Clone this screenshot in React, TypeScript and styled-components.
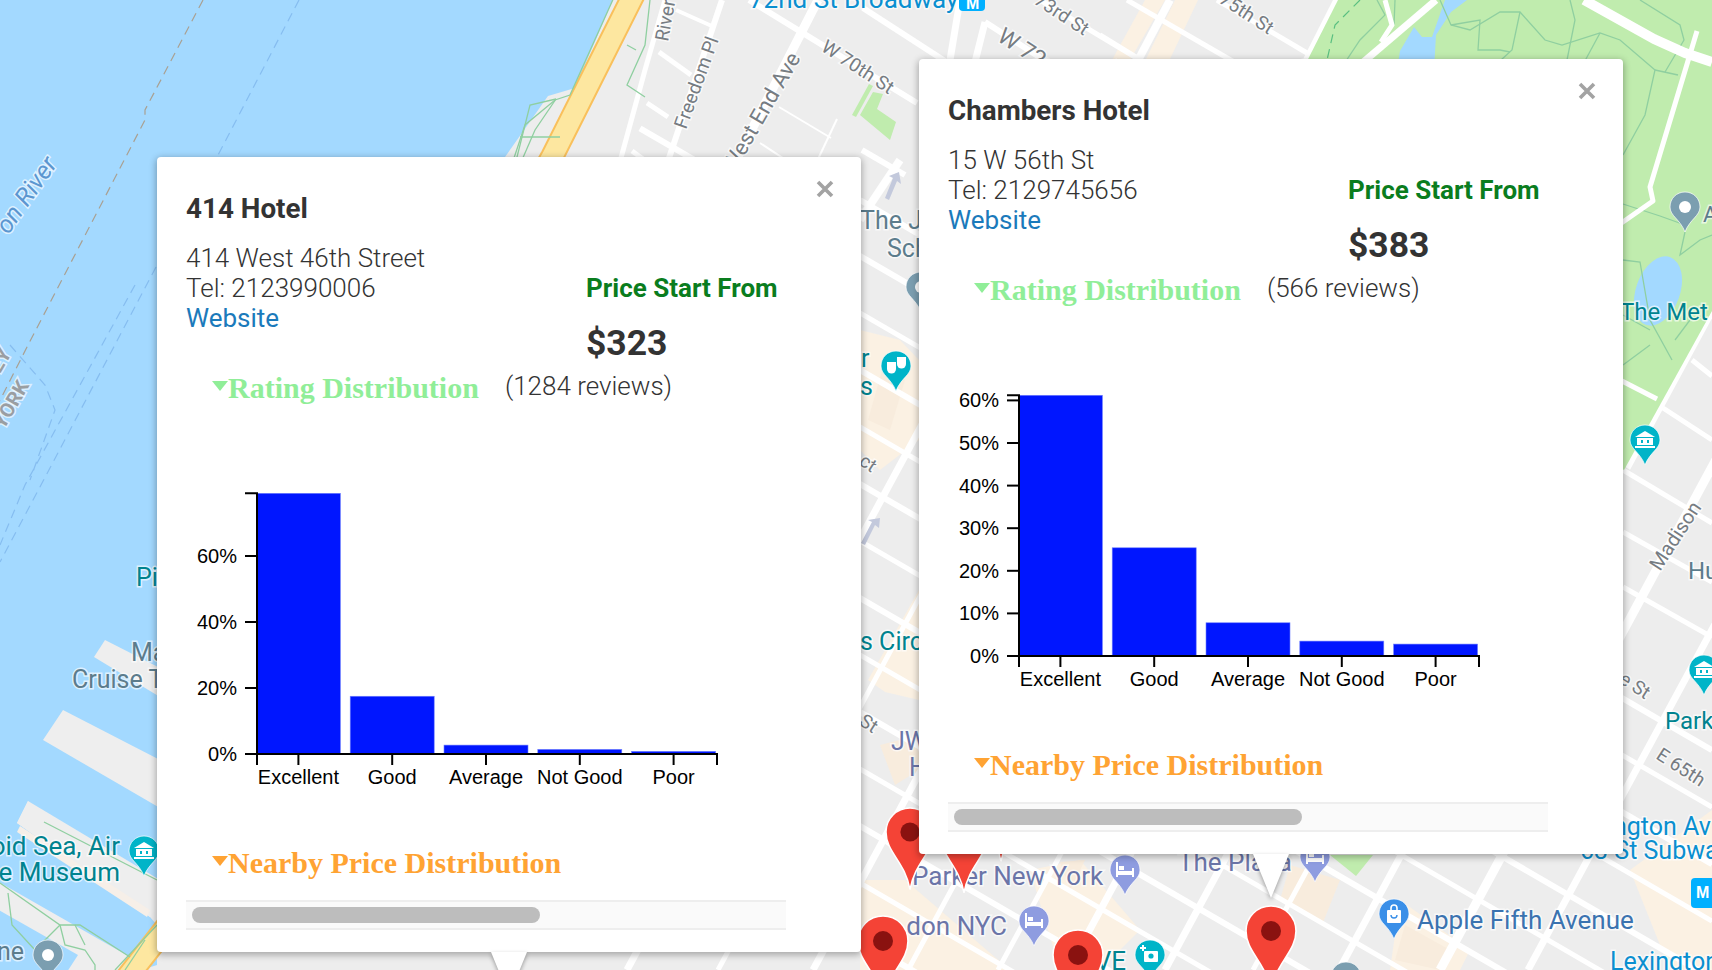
import React from 'react';
import styled, { createGlobalStyle } from 'styled-components';

const GlobalStyle = createGlobalStyle`
  html, body { margin: 0; padding: 0; background: #ededed; }
  body { font-family: Roboto, "Liberation Sans", sans-serif; overflow: hidden; }
`;

const Stage = styled.div`
  position: relative;
  width: 1712px;
  height: 970px;
  overflow: hidden;
`;

const MapCanvas = styled.svg`
  display: block;
  width: 1712px;
  height: 970px;
`;

const Road = styled.polyline`
  fill: none;
  stroke: #ffffff;
  stroke-linejoin: round;
`;

const ParkPath = styled.polyline`
  fill: none;
  stroke: #8fcfa0;
  stroke-width: 1.3;
`;

const Boundary = styled.polyline<{ $tone: string }>`
  fill: none;
  stroke: ${(p) => p.$tone};
  stroke-width: 1.2;
  stroke-dasharray: 9 6;
`;

const toneMap: Record<string, string> = {
  teal: '#00838f',
  indigo: '#6b75a8',
  blue: '#0a8fd0',
  slate: '#5c7c8c',
  gray: '#767c82',
  river: '#5b96d0',
  apple: '#3b73b0',
  state: '#9a9ea2',
};

const MapLabel = styled.text<{ $tone: string; $size: number; $italic?: boolean; $bold?: boolean }>`
  font-family: Roboto, "Liberation Sans", sans-serif;
  font-size: ${(p) => p.$size}px;
  font-style: ${(p) => (p.$italic ? 'italic' : 'normal')};
  font-weight: ${(p) => (p.$bold ? 700 : 400)};
  fill: ${(p) => toneMap[p.$tone]};
  stroke: rgba(255, 255, 255, 0.65);
  stroke-width: 3px;
  paint-order: stroke;
`;

const BadgeLetter = styled.text`
  font-family: "Liberation Sans", sans-serif;
  font-size: 16px;
  font-weight: 700;
  fill: #ffffff;
`;

const Popup = styled.section<{ $left: number; $top: number }>`
  position: absolute;
  left: ${(p) => p.$left}px;
  top: ${(p) => p.$top}px;
  box-sizing: border-box;
  width: 704px;
  height: 795px;
  padding: 35px 0 0 29px;
  background: #ffffff;
  border-radius: 4px;
  box-shadow: 0 2px 7px 1px rgba(0, 0, 0, 0.3);
  color: #333333;
`;

const Tail = styled.div`
  position: absolute;
  left: 334px;
  top: 795px;
  width: 36px;
  height: 44px;
  filter: drop-shadow(0 2px 2px rgba(0, 0, 0, 0.35));
  &::before {
    content: '';
    display: block;
    width: 100%;
    height: 100%;
    background: #ffffff;
    clip-path: polygon(0 0, 100% 0, 50% 100%);
  }
`;

const CloseButton = styled.button`
  position: absolute;
  right: 27px;
  top: 23px;
  width: 18px;
  height: 18px;
  padding: 0;
  border: 0;
  background: none;
  display: block;
`;

const Title = styled.h3`
  margin: 0;
  height: 34px;
  font-size: 27.8px;
  line-height: 34px;
  font-weight: 700;
`;

const InfoRow = styled.div`
  display: flex;
  margin-top: 17px;
`;

const Contact = styled.div`
  width: 400px;
  font-size: 26px;
  line-height: 30px;
  font-weight: 300;
`;

const Line = styled.div`
  white-space: nowrap;
`;

const SiteLink = styled.a`
  display: block;
  color: #1b7abb;
  font-weight: 400;
  text-decoration: none;
`;

const PriceBlock = styled.div`
  padding-top: 30px;
`;

const PriceLabel = styled.div`
  font-size: 26px;
  line-height: 30px;
  font-weight: 700;
  color: #0a7d1e;
  white-space: nowrap;
`;

const PriceValue = styled.div`
  margin-top: 18px;
  font-size: 35.5px;
  line-height: 44px;
  font-weight: 700;
`;

const SectionRow = styled.div`
  display: flex;
  align-items: center;
  height: 36px;
  padding-left: 26px;
`;

const RatingRow = styled(SectionRow)`
  margin-top: 5px;
`;

const Caret = styled.span<{ $color: string }>`
  flex: none;
  width: 0;
  height: 0;
  margin-top: -4px;
  border-left: 8.5px solid transparent;
  border-right: 8.5px solid transparent;
  border-top: 10px solid ${(p) => p.$color};
`;

const SectionTitle = styled.span<{ $color: string }>`
  font-family: "Liberation Serif", serif;
  font-size: 30px;
  line-height: 36px;
  font-weight: 700;
  color: ${(p) => p.$color};
  white-space: nowrap;
`;

const Reviews = styled.span`
  margin-left: 26px;
  margin-bottom: 4px;
  font-size: 26px;
  font-weight: 300;
  white-space: nowrap;
`;

const ChartSvg = styled.svg`
  display: block;
  width: 560px;
  height: 439px;
`;

const AxisLine = styled.path`
  fill: none;
  stroke: #000000;
  stroke-width: 2;
`;

const Bar = styled.rect`
  fill: #0016ff;
  stroke: #7080ff;
  stroke-width: 0.6;
`;

const TickText = styled.text`
  font-family: "Liberation Sans", Arial, sans-serif;
  font-size: 20px;
  fill: #000000;
`;

const ScrollTrack = styled.div`
  box-sizing: border-box;
  display: flex;
  align-items: center;
  width: 600px;
  height: 30px;
  margin-top: 19px;
  padding-left: 6px;
  background: #fafafa;
  border-top: 2px solid #eeeeee;
  border-bottom: 2px solid #eeeeee;
`;

const ScrollThumb = styled.div`
  width: 348px;
  height: 16px;
  border-radius: 8px;
  background: #bdbdbd;
`;

type Hotel = {
  name: string; address: string; tel: string; price: string; reviews: string;
  ticks: number[]; scale: number; values: number[]; left: number; top: number;
};

const hotels: Hotel[] = [
  { name: '414 Hotel', address: '414 West 46th Street', tel: '2123990006', price: '$323', reviews: '(1284 reviews)',
    ticks: [0, 20, 40, 60], scale: 3.3, values: [79, 17.5, 2.7, 1.4, 0.8], left: 157, top: 157 },
  { name: 'Chambers Hotel', address: '15 W 56th St', tel: '2129745656', price: '$383', reviews: '(566 reviews)',
    ticks: [0, 10, 20, 30, 40, 50, 60], scale: 4.26, values: [61.2, 25.4, 7.8, 3.5, 2.8], left: 919, top: 59 },
];

const categories = ['Excellent', 'Good', 'Average', 'Not Good', 'Poor'];

const AXIS_X = 71;
const BASE_Y = 348;
const BAND = 93.8;
const FIRST_CENTER = 112.4;

function RatingChart({ hotel }: { hotel: Hotel }) {
  const top = BASE_Y - hotel.values[0] * hotel.scale;
  return (
    <ChartSvg viewBox="0 0 560 439">
      {hotel.values.map((v, i) => {
        const cx = FIRST_CENTER + BAND * i;
        return <Bar key={i} x={cx - 42} y={BASE_Y - v * hotel.scale} width={84} height={v * hotel.scale} />;
      })}
      <AxisLine d={`M${AXIS_X - 12} ${top}H${AXIS_X}V${BASE_Y}H${AXIS_X - 12}`} />
      <AxisLine d={`M${AXIS_X} ${BASE_Y + 11}V${BASE_Y}H531V${BASE_Y + 11}`} />
      {hotel.ticks.map((t) => {
        const y = BASE_Y - t * hotel.scale;
        return (
          <g key={t}>
            <AxisLine d={`M${AXIS_X - 12} ${y}H${AXIS_X}`} />
            <TickText x={51} y={y + 7} textAnchor="end">{t}%</TickText>
          </g>
        );
      })}
      {categories.map((c, i) => {
        const cx = FIRST_CENTER + BAND * i;
        return (
          <g key={c}>
            <AxisLine d={`M${cx} ${BASE_Y}V${BASE_Y + 11}`} />
            <TickText x={cx} y={BASE_Y + 30} textAnchor="middle">{c}</TickText>
          </g>
        );
      })}
    </ChartSvg>
  );
}

function HotelPopup({ hotel }: { hotel: Hotel }) {
  return (
    <Popup $left={hotel.left} $top={hotel.top}>
      <CloseButton aria-label="Close">
        <svg width="18" height="18" viewBox="0 0 18 18">
          <path d="M2 2L16 16M16 2L2 16" stroke="#a3a3a3" strokeWidth="3.6" fill="none" />
        </svg>
      </CloseButton>
      <Title>{hotel.name}</Title>
      <InfoRow>
        <Contact>
          <Line>{hotel.address}</Line>
          <Line>Tel: {hotel.tel}</Line>
          <SiteLink href="#">Website</SiteLink>
        </Contact>
        <PriceBlock>
          <PriceLabel>Price Start From</PriceLabel>
          <PriceValue>{hotel.price}</PriceValue>
        </PriceBlock>
      </InfoRow>
      <RatingRow>
        <Caret $color="#90ee98" />
        <SectionTitle $color="#90ee98">Rating Distribution</SectionTitle>
        <Reviews>{hotel.reviews}</Reviews>
      </RatingRow>
      <RatingChart hotel={hotel} />
      <SectionRow>
        <Caret $color="#ffa333" />
        <SectionTitle $color="#ffa333">Nearby Price Distribution</SectionTitle>
      </SectionRow>
      <ScrollTrack>
        <ScrollThumb />
      </ScrollTrack>
      <Tail />
    </Popup>
  );
}

function RedPin({ x, y, k = 1 }: { x: number; y: number; k?: number }) {
  return (
    <g transform={`translate(${x} ${y}) scale(${k})`}>
      <path d="M0 0C-14 0-25 11-25 25C-25 46-5 56 0 85C5 56 25 46 25 25C25 11 14 0 0 0Z" fill="#f44336" stroke="#ffffff" strokeWidth="1.6" />
      <ellipse cx="0" cy="25" rx="10" ry="10" fill="#8a1210" />
    </g>
  );
}

function Glyph({ kind }: { kind: string }) {
  if (kind === 'museum') {
    return (
      <g fill="#ffffff">
        <path d="M0 6L-10 12H10Z" />
        <rect x="-8" y="13" width="16" height="7" />
        <rect x="-10" y="21" width="20" height="2" />
        <rect x="-4" y="15" width="2" height="3" fill="#00b4c8" />
        <rect x="2" y="15" width="2" height="3" fill="#00b4c8" />
      </g>
    );
  }
  if (kind === 'hotel') {
    return (
      <g fill="#ffffff">
        <rect x="-9" y="7" width="2" height="15" />
        <rect x="7" y="13" width="2" height="9" />
        <rect x="-7" y="16" width="14" height="4" />
        <rect x="-6" y="11" width="5" height="4" />
      </g>
    );
  }
  if (kind === 'bag') {
    return (
      <g>
        <rect x="-7" y="11" width="14" height="13" rx="1" fill="#ffffff" />
        <path d="M-3 11V9A3 3 0 0 1 3 9V11" fill="none" stroke="#ffffff" strokeWidth="1.6" />
        <path d="M-3 16A3 3 0 0 0 3 16" fill="none" stroke="#3a8fe8" strokeWidth="1.4" />
      </g>
    );
  }
  if (kind === 'camera') {
    return (
      <g fill="#ffffff">
        <rect x="-6" y="11" width="14" height="11" rx="1" />
        <rect x="-10" y="7" width="6" height="2" />
        <rect x="-8" y="5" width="2" height="6" />
        <circle cx="1" cy="16" r="2.6" fill="#00b4c8" />
      </g>
    );
  }
  if (kind === 'masks') {
    return (
      <g fill="#ffffff">
        <path d="M-9 11H0V18A4.500 4.500 0 0 1 -9 18Z" />
        <path d="M1 6H10V13A4.500 4.500 0 0 1 1 13Z" />
      </g>
    );
  }
  return <circle cx="0" cy="15" r="6" fill="#ffffff" />;
}

function PoiPin({ x, y, color, kind, k = 1 }: { x: number; y: number; color: string; kind: string; k?: number }) {
  return (
    <g transform={`translate(${x} ${y}) scale(${k})`}>
      <path d="M0 0C-8.500 0-15 6.500-15 15C-15 24-5 27 0 40C5 27 15 24 15 15C15 6.500 8.500 0 0 0Z" fill={color} stroke="rgba(255,255,255,.7)" strokeWidth="1" />
      <Glyph kind={kind} />
    </g>
  );
}

const streetOffsets = [256, 313, 370, 427, 484, 541, 598, 655, 712, 769, 826, 883, 940];
const avenues = [
  [719, 7], [810, 5], [905, 7], [1000, 5], [1090, 5], [1160, 7], [1257, 7], [1345, 5], [1431, 7], [1532, 9], [1620, 7],
];

const handRoads: [string, number][] = [
  ['665,0 645,70 615,180', 5],
  ['722,0 665,170', 6],
  ['818,0 726,180', 9],
  ['749,0 917,103', 6],
  ['863,8 948,63', 6],
  ['676,10 714,27', 4],
  ['659,52 691,75', 5],
  ['647,103 668,117', 5],
  ['632,151 672,180', 5],
  ['779,107 831,138', 2],
  ['837,119 810,176', 2],
  ['760,143 810,176', 2],
  ['960,0 950,60', 7],
  ['985,22 975,62', 7],
  ['985,22 1075,80', 6],
  ['1040,0 1140,60', 5],
  ['1127,0 1248,70', 5],
  ['1217,0 1307,53', 5],
  ['1100,35 1139,59', 5],
  ['1170,0 1135,66', 8],
  ['1338,0 1300,75', 9],
  ['860,200 920,235', 6],
  ['862,150 905,175', 6],
  ['900,160 860,220', 8],
  ['1692,360 1712,376', 5],
  ['1663,408 1712,440', 5],
  ['1623,470 1712,523', 5],
  ['1623,532 1712,582', 5],
  ['1623,587 1712,637', 5],
  ['1712,311 1627,468', 7],
];

const parkRoads: [string, number][] = [
  ['1584,0 1654,39 1685,53 1712,62', 10],
  ['1697,31 1650,187 1653,201 1620,224', 5],
  ['1436,0 1354,70', 7],
  ['1385,0 1392,25 1381,42', 5],
  ['1620,380 1657,399', 5],
];

const parkPaths = [
  '1340,70 1360,40 1385,15 1377,0',
  '1395,0 1394,25',
  '1440,0 1451,25 1470,30 1500,12 1520,12 1545,40 1562,45 1600,33 1620,40 1655,70 1645,115 1623,155',
  '1451,25 1480,20 1478,50 1500,50 1510,52',
  '1520,12 1512,50 1490,70',
  '1570,0 1575,20 1565,70',
  '1600,33 1580,70',
  '1655,70 1678,75',
  '1640,0 1680,25 1684,40 1665,72',
  '1623,204 1660,216 1685,225',
  '1685,232 1680,255 1700,240 1712,235',
  '1623,260 1640,262 1650,320 1672,360',
  '1623,315 1650,330',
  '1675,340 1690,320',
  '1623,365 1650,345',
];

const shorePaths = [
  '615,-5 570,95 555,100 525,125 510,170',
  '556,99 535,130 522,160',
  '556,99 530,105 515,165',
  '520,137 560,137',
  '650,0 645,45 627,85 645,97',
  '627,45 636,50',
];

const pierPaths = [
  '44,822 157,880',
  '0,883 60,925 80,925 130,957',
  '8,893 12,925 35,950 60,925',
  '60,925 65,945 85,950 95,965 95,970',
  '75,925 85,945',
  '145,940 125,970',
  '157,925 115,970',
];

type L = { t: string; x: number; y: number; s: number; tone: string; r?: number; end?: boolean; i?: boolean; b?: boolean };

const labels: L[] = [
  { t: 'on River', x: 58, y: 164, s: 25, tone: 'river', r: -55, end: true, i: true },
  { t: 'EY', x: 0, y: 374, s: 20, tone: 'state', r: -60, b: true },
  { t: 'YORK', x: 4, y: 430, s: 20, tone: 'state', r: -60, b: true },
  { t: 'Pi', x: 136, y: 586, s: 25, tone: 'teal' },
  { t: 'Ma', x: 131, y: 661, s: 25, tone: 'slate' },
  { t: 'Cruise T', x: 72, y: 688, s: 25, tone: 'slate' },
  { t: 'oid Sea, Air', x: 120, y: 855, s: 26, tone: 'teal', end: true },
  { t: 'e Museum', x: 120, y: 881, s: 26, tone: 'teal', end: true },
  { t: 'ne', x: 24, y: 960, s: 25, tone: 'slate', end: true },
  { t: 'River', x: 668, y: 42, s: 19, tone: 'gray', r: -80 },
  { t: 'Freedom Pl', x: 686, y: 130, s: 19, tone: 'gray', r: -70 },
  { t: 'West End Ave', x: 801, y: 58, s: 22, tone: 'gray', r: -60, end: true },
  { t: 'W 70th St', x: 820, y: 50, s: 19, tone: 'gray', r: 33 },
  { t: 'W 72nd St', x: 996, y: 40, s: 23, tone: 'gray', r: 33 },
  { t: '73rd St', x: 1033, y: 3, s: 19, tone: 'gray', r: 33 },
  { t: '75th St', x: 1218, y: 2, s: 19, tone: 'gray', r: 33 },
  { t: '72nd St Broadway', x: 749, y: 8, s: 26, tone: 'blue' },
  { t: 'The J', x: 860, y: 229, s: 25, tone: 'slate' },
  { t: 'Sch', x: 887, y: 257, s: 25, tone: 'slate' },
  { t: 'r', x: 861, y: 367, s: 25, tone: 'teal' },
  { t: 's', x: 860, y: 395, s: 25, tone: 'teal' },
  { t: 's Circ', x: 860, y: 650, s: 25, tone: 'teal', },
  { t: 'St', x: 858, y: 724, s: 19, tone: 'gray', r: 33 },
  { t: 'ct', x: 858, y: 464, s: 19, tone: 'gray', r: 33 },
  { t: 'JW', x: 891, y: 750, s: 25, tone: 'indigo' },
  { t: 'H', x: 909, y: 776, s: 25, tone: 'indigo' },
  { t: 'Parker New York', x: 912, y: 885, s: 26, tone: 'indigo' },
  { t: 'don NYC', x: 1007, y: 935, s: 26, tone: 'indigo', end: true },
  { t: 'VE', x: 1126, y: 970, s: 26, tone: 'teal', end: true },
  { t: 'The Plaza', x: 1178, y: 871, s: 26, tone: 'indigo' },
  { t: 'Apple Fifth Avenue', x: 1417, y: 929, s: 26, tone: 'apple' },
  { t: 'Lexington', x: 1610, y: 970, s: 25, tone: 'blue' },
  { t: 'ngton Av', x: 1613, y: 835, s: 25, tone: 'blue' },
  { t: '63 St Subwa', x: 1580, y: 859, s: 25, tone: 'blue' },
  { t: 'The Met', x: 1620, y: 320, s: 24, tone: 'teal' },
  { t: 'Madison', x: 1660, y: 572, s: 20, tone: 'gray', r: -57 },
  { t: 'Hu', x: 1688, y: 579, s: 24, tone: 'slate' },
  { t: 'e St', x: 1618, y: 682, s: 19, tone: 'gray', r: 33 },
  { t: 'Park', x: 1665, y: 729, s: 24, tone: 'teal' },
  { t: 'E 65th', x: 1655, y: 758, s: 19, tone: 'gray', r: 33 },
  { t: 'A', x: 1703, y: 222, s: 22, tone: 'slate' },
];

function StreetMap() {
  return (
    <MapCanvas viewBox="0 0 1712 970">
      <rect x="0" y="0" width="1712" height="970" fill="#ededed" />
      <g fill="#fbf1e3">
        <polygon points="1145,0 1165,0 1130,60 1112,60" />
        <polygon points="1175,0 1198,0 1170,59 1146,59" />
        <polygon points="860,330 900,340 919,360 919,440 880,470 860,450" />
        <polygon points="868,680 919,590 919,700 885,692" />
        <polygon points="860,880 905,880 1010,970 860,970" />
        <polygon points="1030,870 1080,860 1140,930 1100,970 1060,970" />
        <polygon points="1630,870 1712,810 1712,970 1670,970" />
        <polygon points="1400,900 1470,950 1460,970 1390,970" />
      </g>
      <g fill="#f8ecdd">
        <polygon points="1290,865 1340,880 1322,925 1280,900" />
        <polygon points="1405,925 1450,950 1440,970 1395,960" />
        <polygon points="885,360 905,380 890,430 868,420" />
        <polygon points="880,745 919,735 919,770 895,785" />
        <polygon points="1060,862 1085,860 1070,890" />
      </g>
      {streetOffsets.map((y0) => (
        <Road key={y0} points={`640,${y0 - 127.6} 1712,${y0 + 494.2}`} strokeWidth={y0 % 2 ? 5 : 6} />
      ))}
      {avenues.map(([x0, w]) => (
        <Road key={x0} points={`${x0 + 400},60 ${x0 - 92},970`} strokeWidth={w} />
      ))}
      {handRoads.map(([p, w]) => <Road key={p} points={p} strokeWidth={w} />)}
      <polygon points="1338,0 1300,75 1400,300 1624,470 1712,311 1712,0" fill="#c0ecae" />
      <polygon points="873,92 883,94 877,109 896,122 890,140 860,115" fill="#c0ecae" />
      <polygon points="869,84 873,86 856,117 852,115" fill="#c0ecae" />
      <polygon points="1330,855 1373,855 1356,876" fill="#c0ecae" />
      <polygon points="1467,0 1451,12 1436,35 1434,70 1397,70 1400,51 1414,27 1422,37 1432,37 1445,0" fill="#a3d9ff" />
      <ellipse cx="1658" cy="291" rx="22" ry="36" transform="rotate(20 1658 291)" fill="#a3d9ff" />
      {parkPaths.map((p) => <ParkPath key={p} points={p} />)}
      {parkRoads.map(([p, w]) => <Road key={p} points={p} strokeWidth={w} />)}
      <Boundary $tone="#59bf80" points="1360,0 1335,25 1327,60" />

      <polygon points="-5,-5 615,-5 575,88 548,96 505,157 300,500 157,880 157,905 44,822 28,801 17,823 150,917 157,925 157,965 125,975 -5,975" fill="#a3d9ff" />
      <g fill="#eeeeee">
        <polygon points="105,640 94,657 160,697 160,668" />
        <polygon points="63,710 43,740 160,808 160,760" />
        <polygon points="28,801 17,823 150,917 160,905 160,880" />
        <polygon points="-5,880 -5,908 78,955 65,975 135,975 160,940 130,957" />
      </g>
      <polygon points="20,826 150,910 147,917 17,832" fill="#f6efe8" />
      <polyline points="636,-10 552,157 300,600" fill="none" stroke="#f9c05c" strokeWidth="24" />
      <polyline points="636,-10 552,157 300,600" fill="none" stroke="#fde7a0" strokeWidth="20" />
      <polyline points="172,920 125,980" fill="none" stroke="#f9c05c" strokeWidth="24" />
      <polyline points="172,920 125,980" fill="none" stroke="#fde7a0" strokeWidth="20" />
      {shorePaths.map((p) => <ParkPath key={p} points={p} />)}
      {pierPaths.map((p) => <ParkPath key={p} points={p} />)}
      <Boundary $tone="#a9a092" points="203,0 145,110 145,120 27,347 -10,420" />
      <Boundary $tone="#86bdf0" points="299,0 217,157" />
      <Boundary $tone="#86bdf0" points="156,267 41,485 0,562" />
      <Boundary $tone="#86bdf0" points="135,285 25,485 0,545" />
      <Boundary $tone="#86bdf0" points="10,345 45,385 55,410 30,480" />

      <polygon points="893,178 885,198 889,200 897,181 901,184 899,172 889,176" fill="#c3c9dc" />
      <polygon points="875,525 865,545 861,543 872,522 868,520 880,518 879,528" fill="#c3c9dc" />

      {labels.map((l) => (
        <MapLabel
          key={l.t}
          x={l.x}
          y={l.y}
          $size={l.s}
          $tone={l.tone}
          $italic={l.i}
          $bold={l.b}
          textAnchor={l.end ? 'end' : 'start'}
          transform={l.r ? `rotate(${l.r} ${l.x} ${l.y})` : undefined}
        >
          {l.t}
        </MapLabel>
      ))}

      <rect x="959" y="-10" width="26" height="21" rx="4" fill="#00b0ff" />
      <BadgeLetter x="966" y="9">M</BadgeLetter>
      <rect x="1691" y="878" width="30" height="30" rx="4" fill="#00b0ff" />
      <BadgeLetter x="1696" y="898">M</BadgeLetter>

      <PoiPin x={144} y={836} color="#00b4c8" kind="museum" />
      <PoiPin x={48} y={940} color="#7b9eb0" kind="dot" />
      <PoiPin x={896} y={351} color="#00b4c8" kind="masks" />
      <PoiPin x={921} y={272} color="#7b9eb0" kind="dot" />
      <PoiPin x={1685} y={192} color="#7b9eb0" kind="dot" />
      <PoiPin x={1645} y={425} color="#00b4c8" kind="museum" />
      <PoiPin x={1704} y={655} color="#00b4c8" kind="museum" />
      <PoiPin x={1125} y={855} color="#8e9ce0" kind="hotel" />
      <PoiPin x={1034} y={906} color="#8e9ce0" kind="hotel" />
      <PoiPin x={1315} y={842} color="#8e9ce0" kind="hotel" />
      <PoiPin x={1394} y={899} color="#3a8fe8" kind="bag" />
      <PoiPin x={1150} y={940} color="#00b4c8" kind="camera" />
      <PoiPin x={1346} y={962} color="#7b9eb0" kind="dot" />

      <RedPin x={1001} y={785} k={0.9} />
      <RedPin x={964} y={812} k={0.95} />
      <RedPin x={910} y={808} k={0.96} />
      <RedPin x={883} y={916} />
      <RedPin x={1078} y={930} />
      <RedPin x={1271} y={906} />
    </MapCanvas>
  );
}

export default function App() {
  return (
    <Stage>
      <GlobalStyle />
      <StreetMap />
      {hotels.map((h) => <HotelPopup key={h.name} hotel={h} />)}
    </Stage>
  );
}
